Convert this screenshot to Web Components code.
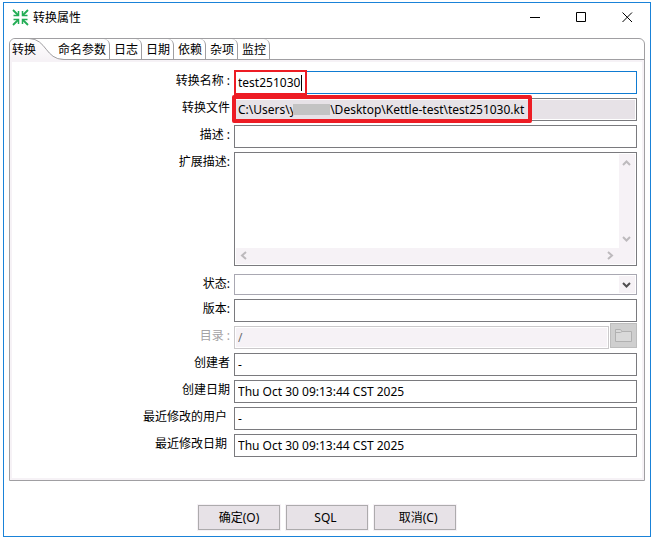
<!DOCTYPE html>
<html lang="zh-CN">
<head>
<meta charset="utf-8">
<title>转换属性</title>
<style>
  body {
    margin: 0;
    padding: 2px 1px 1px 3px;
    background: #fff;
    color: #000;
    font: 12px/18px "Noto Sans", "Noto Sans CJK SC", sans-serif;
  }
</style>
</head>
<body>
<dialog-window caption="转换属性">
  <tab-folder tabs="转换,命名参数,日志,日期,依赖,杂项,监控">
    <prop-field label="转换名称 :" value="test251030" kind="active"><mark-box></mark-box></prop-field>
    <prop-field label="转换文件" value="C:\Users\y           \Desktop\Kettle-test\test251030.kt" kind="readonly"><mark-box size="large"></mark-box></prop-field>
    <prop-field label="描述 :"></prop-field>
    <prop-area label="扩展描述:"></prop-area>
    <prop-select label="状态:"></prop-select>
    <prop-field label="版本:"></prop-field>
    <prop-field label="目录 :" value="/" kind="disabled"><folder-button slot="after"></folder-button></prop-field>
    <prop-field label="创建者" value="-"></prop-field>
    <prop-field label="创建日期" value="Thu Oct 30 09:13:44 CST 2025"></prop-field>
    <prop-field label="最近修改的用户&nbsp;" value="-"></prop-field>
    <prop-field label="最近修改日期&nbsp;" value="Thu Oct 30 09:13:44 CST 2025"></prop-field>
  </tab-folder>
  <push-button slot="actions">确定(O)</push-button>
  <push-button slot="actions">SQL&nbsp;</push-button>
  <push-button slot="actions">&nbsp;&nbsp;取消(C)</push-button>
</dialog-window>

<script>
// Shared by every row: label column on the left, control on the right
const rowStyles = `
  :host {
    display: grid;
    grid-template-columns: 218px minmax(0, 1fr);
    column-gap: 4px;
    align-items: start;
  }
  * { box-sizing: border-box; }
  label {
    padding-top: 1px;
    text-align: right;
    white-space: pre;
  }
  input, textarea, select {
    margin: 0;
    font: inherit;
    color: inherit;
    outline: none;
    border-radius: 0;
  }
`;

const chevron = (d, color) => `
  <svg width="16" height="17" viewBox="0 0 16 17" fill="none" stroke="${color}" stroke-width="2" aria-hidden="true">
    <path d="${d}"/>
  </svg>`;

class DialogWindow extends HTMLElement {
  constructor() {
    super();
    this.attachShadow({ mode: 'open' });
    this.shadowRoot.innerHTML = `
      <style>
        :host {
          display: block;
          border: 1px solid #1a82d8;
        }
        header {
          display: flex;
          align-items: center;
          height: 29px;
          padding-left: 8px;
        }
        h1 {
          flex: 1;
          margin: 0 0 0 4px;
          padding-top: 1px;
          font-size: 12px;
          font-weight: normal;
        }
        header button {
          display: flex;
          align-items: center;
          justify-content: center;
          width: 46px;
          height: 29px;
          padding: 0;
          border: 0;
          background: none;
        }
        main { padding: 6px 5px 0; }
        footer {
          display: flex;
          justify-content: center;
          gap: 6px;
          padding: 24px 0 6px;
        }
      </style>
      <header>
        <svg width="17" height="17" viewBox="0 0 17 17" fill="none" stroke="#23ad55" aria-hidden="true">
          <path stroke-width="1.8" d="M1 1L6 6M16 1L11 6M1 16L6 11M16 16L11 11"/>
          <path stroke-width="1.5" d="M6.500 2V6.500H1.500M10.500 2V6.500H15.500M6.500 15V10.500H1.500M10.500 15V10.500H15.500"/>
        </svg>
        <h1></h1>
        <button aria-label="最小化"><svg width="11" height="11" stroke="#000"><path d="M0 5.5H10"/></svg></button>
        <button aria-label="最大化"><svg width="11" height="11" fill="none" stroke="#000"><path d="M.5 .5H9.500V9.500H.5Z"/></svg></button>
        <button aria-label="关闭"><svg width="11" height="11" stroke="#000"><path d="M.5 .5L10 10M10 .5L.5 10"/></svg></button>
      </header>
      <main><slot></slot></main>
      <footer><slot name="actions"></slot></footer>
    `;
  }

  connectedCallback() {
    this.shadowRoot.querySelector('h1').textContent = this.getAttribute('caption');
  }
}

class TabFolder extends HTMLElement {
  constructor() {
    super();
    this.attachShadow({ mode: 'open' });
    this.shadowRoot.innerHTML = `
      <style>
        :host {
          display: block;
          border: 1px solid #a09fa2;
          border-radius: 6px 6px 0 0;
        }
        nav {
          display: flex;
          height: 21px;
          box-sizing: border-box;
          border-bottom: 1px solid #a09fa2;
        }
        button {
          padding: 2px 3px 0 4px;
          border: 0;
          border-right: 1px solid #a09fa2;
          border-radius: 0 6px 0 0;
          background: none;
          font: inherit;
          color: inherit;
          white-space: nowrap;
        }
        button[aria-selected="true"] {
          position: relative;
          width: 44px;
          padding: 2px 0 0 2px;
          border: 0;
          text-align: left;
        }
        /* the swoosh reaches over the next tab */
        svg {
          position: absolute;
          left: 0;
          top: -1px;
        }
        span { position: relative; }
        section {
          display: grid;
          gap: 4px;
          padding: 9px 5px 21px 0;
          border: 2px solid #f6f2f6;
        }
      </style>
      <nav role="tablist"></nav>
      <section role="tabpanel"><slot></slot></section>
    `;
  }

  connectedCallback() {
    const nav = this.shadowRoot.querySelector('nav');
    this.getAttribute('tabs').split(',').forEach((name, i) => {
      const tab = document.createElement('button');
      tab.setAttribute('role', 'tab');
      tab.setAttribute('aria-selected', i === 0);
      if (i === 0) {
        tab.innerHTML = `
          <svg width="56" height="22" viewBox="0 0 56 22" aria-hidden="true">
            <defs><linearGradient id="fade" x2="0" y2="1"><stop stop-color="#fff"/><stop offset="1" stop-color="#f6f2f6"/></linearGradient></defs>
            <path d="M0 22V6Q1 1 6 1H20C38 1 36 21.500 54 21.500V22Z" fill="url(#fade)"/>
            <path d="M19 .5C37 1 35 21.500 54 21.500" fill="none" stroke="#a09fa2"/>
          </svg>`;
      }
      const text = document.createElement('span');
      text.textContent = name;
      tab.append(text);
      nav.append(tab);
    });
  }
}

class PropField extends HTMLElement {
  constructor() {
    super();
    this.attachShadow({ mode: 'open' });
    this.shadowRoot.innerHTML = `
      <style>
        ${rowStyles}
        div {
          position: relative;
          display: flex;
        }
        input {
          flex: 1;
          min-width: 0;
          height: 23px;
          padding: 0 3px;
          border: 1px solid #7a7a7e;
          background: #fff;
        }
        :host([kind="active"]) input { border-color: #0f7bd2; }
        :host([kind="readonly"]) input {
          background: #e7e2e7;
          box-shadow: inset 0 0 0 1px #fff;
        }
        :host([kind="disabled"]) label { color: #a4a2a4; }
        :host([kind="disabled"]) input {
          border-color: #cbc9cb;
          background: #f6f2f6;
          box-shadow: inset 0 0 0 1px #fff;
          color: #6d6d6d;
        }
      </style>
      <label for="field"></label>
      <div><input id="field" type="text"><slot></slot><slot name="after"></slot></div>
    `;
  }

  connectedCallback() {
    const input = this.shadowRoot.querySelector('input');
    this.shadowRoot.querySelector('label').textContent = this.getAttribute('label');
    input.value = this.getAttribute('value') || '';
    input.readOnly = this.getAttribute('kind') === 'readonly';
    input.disabled = this.getAttribute('kind') === 'disabled';
  }
}

class PropArea extends HTMLElement {
  constructor() {
    super();
    this.attachShadow({ mode: 'open' });
    this.shadowRoot.innerHTML = `
      <style>
        ${rowStyles}
        :host { margin-bottom: 4px; }
        .box {
          display: grid;
          grid-template-columns: minmax(0, 1fr) 16px;
          padding: 1px;
          border: 1px solid #7a7a7e;
        }
        textarea {
          height: 94px;
          padding: 2px;
          border: 0;
          resize: none;
        }
        .bar {
          display: flex;
          justify-content: space-between;
          background: #f6f2f6;
        }
        .side { flex-direction: column; }
        .bottom {
          grid-column: 1 / -1;
          height: 16px;
          padding-right: 17px;
        }
        svg { display: block; }
      </style>
      <label for="area"></label>
      <div class="box">
        <textarea id="area"></textarea>
        <div class="bar side">${chevron('M4 11L7.500 7.500L11 11', '#bdbabd')}${chevron('M4 6L7.500 9.500L11 6', '#bdbabd')}</div>
        <div class="bar bottom">${chevron('M10 4L6 7.500L10 11', '#bdbabd')}${chevron('M6 4L10 7.500L6 11', '#bdbabd')}</div>
      </div>
    `;
  }

  connectedCallback() {
    this.shadowRoot.querySelector('label').textContent = this.getAttribute('label');
  }
}

class PropSelect extends HTMLElement {
  constructor() {
    super();
    this.attachShadow({ mode: 'open' });
    this.shadowRoot.innerHTML = `
      <style>
        ${rowStyles}
        .box {
          display: grid;
          grid-template-columns: minmax(0, 1fr) 16px;
          padding: 1px;
          border: 1px solid #a9a8b2;
        }
        select {
          grid-area: 1 / 1 / 2 / 3;
          height: 17px;
          padding: 0 2px;
          border: 0;
          background: #fff;
          appearance: none;
        }
        svg {
          grid-area: 1 / 2;
          background: #f6f2f6;
          pointer-events: none;
        }
      </style>
      <label for="choice"></label>
      <div class="box">
        <select id="choice"><option></option></select>
        ${chevron('M4 7L7.500 10.500L11 7', '#504e50')}
      </div>
    `;
  }

  connectedCallback() {
    this.shadowRoot.querySelector('label').textContent = this.getAttribute('label');
  }
}

class FolderButton extends HTMLElement {
  constructor() {
    super();
    this.attachShadow({ mode: 'open' });
    this.shadowRoot.innerHTML = `
      <style>
        :host {
          display: block;
          height: 23px;
          margin-left: 1px;
        }
        button {
          display: block;
          width: 27px;
          height: 25px;
          margin-top: -3px;
          padding: 0;
          border: 1px solid #bdbdbd;
          background: #cfcfcf;
        }
        svg { display: block; margin: 0 auto; }
      </style>
      <button disabled aria-label="浏览">
        <svg width="17" height="13" viewBox="0 0 17 13" fill="#d9d9d9" stroke="#b1b1b1" aria-hidden="true">
          <path d="M.5 12.500V.5H5.500L7 2.500H16.500V12.500Z"/>
          <path d="M.5 3.500H5.500L7 2.500"/>
        </svg>
      </button>
    `;
  }
}

// Red highlight laid over a field; the large one also masks the user name
class MarkBox extends HTMLElement {
  constructor() {
    super();
    this.attachShadow({ mode: 'open' });
    this.shadowRoot.innerHTML = `
      <style>
        :host {
          position: absolute;
          left: 0;
          top: -1px;
          box-sizing: border-box;
          width: 73px;
          height: 25px;
          border: 2px solid #ed1c24;
          pointer-events: none;
        }
        :host([size="large"]) {
          z-index: 1;
          left: -2px;
          top: -3px;
          width: 300px;
          height: 28px;
          border-width: 4px;
          border-radius: 2px;
        }
        i {
          position: absolute;
          left: 65px;
          top: 3px;
          width: 1px;
          height: 16px;
          background: #000;
        }
        :host([size="large"]) i {
          left: 57px;
          top: 5px;
          width: 37px;
          height: 11px;
          background: #c3c3c3;
        }
      </style>
      <i></i>
    `;
  }
}

class PushButton extends HTMLElement {
  constructor() {
    super();
    this.attachShadow({ mode: 'open' });
    this.shadowRoot.innerHTML = `
      <style>
        :host { display: block; }
        button {
          display: block;
          width: 82px;
          height: 25px;
          padding: 0;
          border: 1px solid #adabad;
          background: #e7e2e7;
          box-shadow: 0 0 0 1px #f6f2f6;
          font: inherit;
          color: inherit;
        }
      </style>
      <button><slot></slot></button>
    `;
  }
}

customElements.define('dialog-window', DialogWindow);
customElements.define('tab-folder', TabFolder);
customElements.define('prop-field', PropField);
customElements.define('prop-area', PropArea);
customElements.define('prop-select', PropSelect);
customElements.define('folder-button', FolderButton);
customElements.define('mark-box', MarkBox);
customElements.define('push-button', PushButton);
</script>
</body>
</html>
